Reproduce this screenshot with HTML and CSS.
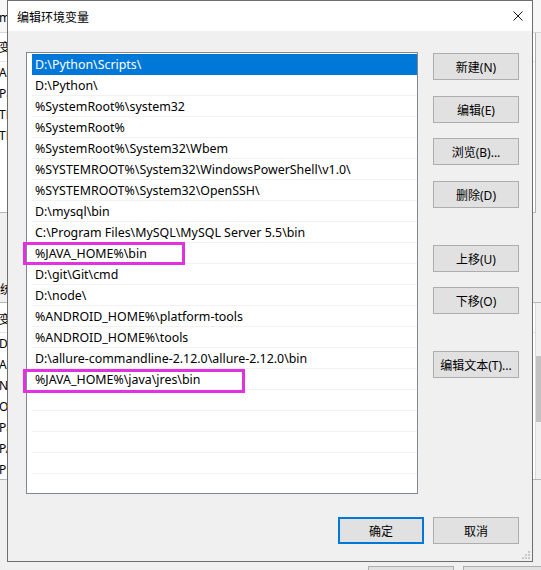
FILE: index.html
```html
<!DOCTYPE html>
<html lang="zh-CN">
<head>
<meta charset="utf-8">
<title>编辑环境变量</title>
<link rel="stylesheet" href="styles.css">
</head>
<body>
<div class="desk">
  <div class="bgwin">
    <div class="bg-head">m</div>
    <div class="bg-list bg-list1">
      <div class="bg-hdr">变量</div>
      <div class="bg-row">ANDROID_HOME</div>
      <div class="bg-row">Path</div>
      <div class="bg-row">TEMP</div>
      <div class="bg-row">TMP</div>
    </div>
    <div class="bg-mid">系统变量(S)</div>
    <div class="bg-list bg-list2">
      <div class="bg-list2-main">
        <div class="bg-hdr">变量</div>
        <div class="bg-row">Driver</div>
        <div class="bg-row">ANDROID_HOME</div>
        <div class="bg-row">NUMBER_OF_PROCESSORS</div>
        <div class="bg-row">OS</div>
        <div class="bg-row">Path</div>
        <div class="bg-row">PATHEXT</div>
        <div class="bg-row">PROCESSOR_ARCHITECTURE</div>
      </div>
      <div class="bg-scroll"><div class="bg-thumb"></div></div>
    </div>
    <div class="bg-btns">
      <div class="bg-btn"></div>
      <div class="bg-btn"></div>
    </div>
  </div>

  <div class="dialog">
    <div class="titlebar">
      <span class="title">编辑环境变量</span>
      <svg class="close" width="10" height="10" viewBox="0 0 10 10"><path d="M0.5 0.5L9.5 9.5M9.5 0.5L0.5 9.5" stroke="#1a1a1a" stroke-width="1" fill="none"/></svg>
    </div>
    <div class="body">
      <div class="list">
        <div class="row sel">D:\Python\Scripts\</div>
        <div class="row">D:\Python\</div>
        <div class="row">%SystemRoot%\system32</div>
        <div class="row">%SystemRoot%</div>
        <div class="row">%SystemRoot%\System32\Wbem</div>
        <div class="row">%SYSTEMROOT%\System32\WindowsPowerShell\v1.0\</div>
        <div class="row">%SYSTEMROOT%\System32\OpenSSH\</div>
        <div class="row">D:\mysql\bin</div>
        <div class="row">C:\Program Files\MySQL\MySQL Server 5.5\bin</div>
        <div class="row">%JAVA_HOME%\bin</div>
        <div class="row">D:\git\Git\cmd</div>
        <div class="row">D:\node\</div>
        <div class="row">%ANDROID_HOME%\platform-tools</div>
        <div class="row">%ANDROID_HOME%\tools</div>
        <div class="row">D:\allure-commandline-2.12.0\allure-2.12.0\bin</div>
        <div class="row">%JAVA_HOME%\java\jres\bin</div>
        <div class="row"></div>
        <div class="row"></div>
        <div class="row"></div>
        <div class="row"></div>
        <div class="row"></div>
      </div>
      <div class="side">
        <div class="btn">新建(N)</div>
        <div class="btn b2">编辑(E)</div>
        <div class="btn b3">浏览(B)...</div>
        <div class="btn b2">删除(D)</div>
        <div class="btn b5">上移(U)</div>
        <div class="btn b3">下移(O)</div>
        <div class="btn b5">编辑文本(T)...</div>
      </div>
      <div class="footer">
        <div class="btn default">确定</div>
        <div class="btn">取消</div>
      </div>
    </div>
    <svg class="grip" width="8" height="8" viewBox="0 0 8 8">
      <rect x="6" y="0" width="2" height="2" fill="#c8c8c8"/>
      <rect x="3" y="3" width="2" height="2" fill="#c8c8c8"/>
      <rect x="6" y="3" width="2" height="2" fill="#c8c8c8"/>
      <rect x="0" y="6" width="2" height="2" fill="#c8c8c8"/>
      <rect x="3" y="6" width="2" height="2" fill="#c8c8c8"/>
      <rect x="6" y="6" width="2" height="2" fill="#c8c8c8"/>
    </svg>
  </div>

  <div class="mark mark1"></div>
  <div class="mark mark2"></div>
</div>
</body>
</html>
```

FILE: styles.css
```css
* { box-sizing: border-box; }
html, body { margin: 0; padding: 0; }
body {
  width: 541px;
  height: 570px;
  overflow: hidden;
  background: #f0f0f0;
  font-family: "Noto Sans", "Noto Sans CJK SC", sans-serif;
  font-size: 12px;
  color: #000;
}
.desk { position: relative; width: 541px; height: 570px; overflow: hidden; }

/* background window */
.bgwin {
  position: absolute;
  left: -12px;
  top: 0;
  width: 560px;
  height: 600px;
  background: #f0f0f0;
  display: flex;
  flex-direction: column;
}
.bg-head {
  height: 33px;
  padding-left: 11px;
  line-height: 36px;
  background: #f7f7f7;
  border-bottom: 1px solid #d6d6d6;
}
.bg-list { width: 548px; background: #fff; border-right: 1px solid #adadad; }
.bg-list1 { height: 180px; border-bottom: 1px solid #b8b8b8; }
.bg-hdr { height: 29px; line-height: 30px; padding-left: 11px; border-bottom: 1px solid #e5e5e5; }
.bg-row { height: 21px; line-height: 21px; padding-left: 11px; }
.bg-mid { height: 89px; line-height: 20px; padding-top: 67px; padding-left: 0; }
.bg-list2 {
  width: 553px;
  height: 178px;
  display: flex;
  border-top: 1px solid #b8b8b8;
  border-bottom: 1px solid #b8b8b8;
  border-right: none;
}
.bg-list2-main { flex: 1; }
.bg-list2 .bg-hdr { height: 30px; line-height: 34px; }
.bg-scroll { width: 6px; background: #f0f0f0; border-left: 1px solid #dadada; padding-top: 53px; }
.bg-thumb { height: 66px; background: #c2c2c2; }
.bg-btns { display: flex; gap: 9px; margin-top: 86px; padding-left: 380px; }
.bg-btn { width: 86px; height: 24px; border: 1px solid #adadad; background: #e1e1e1; }

/* dialog */
.dialog {
  position: absolute;
  left: 7px;
  top: 0;
  width: 526px;
  height: 562px;
  border: 1px solid #6e6e6e;
  background: #f0f0f0;
  display: flex;
  flex-direction: column;
}
.titlebar {
  height: 30px;
  background: #fff;
  display: flex;
  align-items: center;
  padding-left: 9px;
  padding-right: 9px;
  flex-shrink: 0;
}
.title { font-family: "Noto Sans CJK SC", sans-serif; font-size: 12px; color: #000; }
.close { margin-left: auto; display: block; }

.body {
  flex: 1;
  padding: 21px 13px 0 18px;
  display: grid;
  grid-template-columns: 392px 86px;
  column-gap: 15px;
  grid-template-rows: 442px auto;
  align-content: start;
}
.list {
  height: 442px;
  background: #fff;
  border: 1px solid #828790;
  padding: 1px 0 0 5px;
  overflow: hidden;
}
.row {
  height: 21px;
  line-height: 21px;
  padding-left: 3px;
  border-bottom: 1px solid #f2f2f2;
  white-space: nowrap;
  font-size: 12.4px;
  color: #000;
}
.row.sel { background: #0078d7; color: #fff; border-bottom-color: #0078d7; }

.side { display: flex; flex-direction: column; padding-top: 1px; }
.btn {
  width: 86px;
  height: 27px;
  border: 1px solid #adadad;
  background: #e1e1e1;
  display: flex;
  align-items: center;
  justify-content: center;
  font-family: "Noto Sans", "Noto Sans CJK SC", sans-serif;
  font-size: 12px;
  color: #000;
  white-space: nowrap;
}
.btn.b2 { margin-top: 16px; }
.btn.b3 { margin-top: 15px; }
.btn.b5 { margin-top: 37px; }

.footer {
  grid-column: 1 / 3;
  display: flex;
  justify-content: flex-end;
  gap: 9px;
  margin-top: 23px;
}
.btn.default { border: 2px solid #0078d7; }

.grip { position: absolute; right: 2px; bottom: 2px; }

/* annotation boxes */
.mark { position: absolute; border: 3px solid #e032e0; }
.mark1 { left: 23px; top: 242px; width: 162px; height: 23px; }
.mark2 { left: 23px; top: 369px; width: 222px; height: 24px; }
```
